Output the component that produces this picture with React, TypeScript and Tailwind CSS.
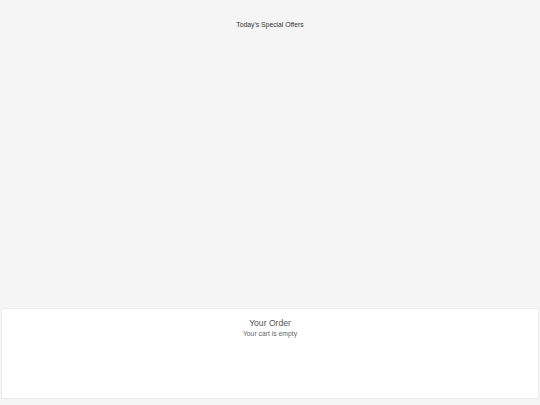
import React from 'react';

const font = { fontFamily: '"Liberation Sans", Arial, sans-serif' };

export default function App() {
  return (
    <div className="h-[405px] w-full flex flex-col bg-[#f5f5f5]" style={font}>
      <main className="flex-1 pt-[21px] text-center">
        <h1 className="text-[6.8px] leading-[8px] text-[#333]">Today's Special Offers</h1>
      </main>
      <section className="mx-[1px] mb-[6px] h-[91px] bg-white border border-[#ececec] rounded-[2px] pt-[9px] text-center">
        <h2 className="text-[8.6px] leading-[10px] text-[#555]">Your Order</h2>
        <p className="mt-[2px] text-[6.8px] leading-[8px] text-[#666]">Your cart is empty</p>
      </section>
    </div>
  );
}
